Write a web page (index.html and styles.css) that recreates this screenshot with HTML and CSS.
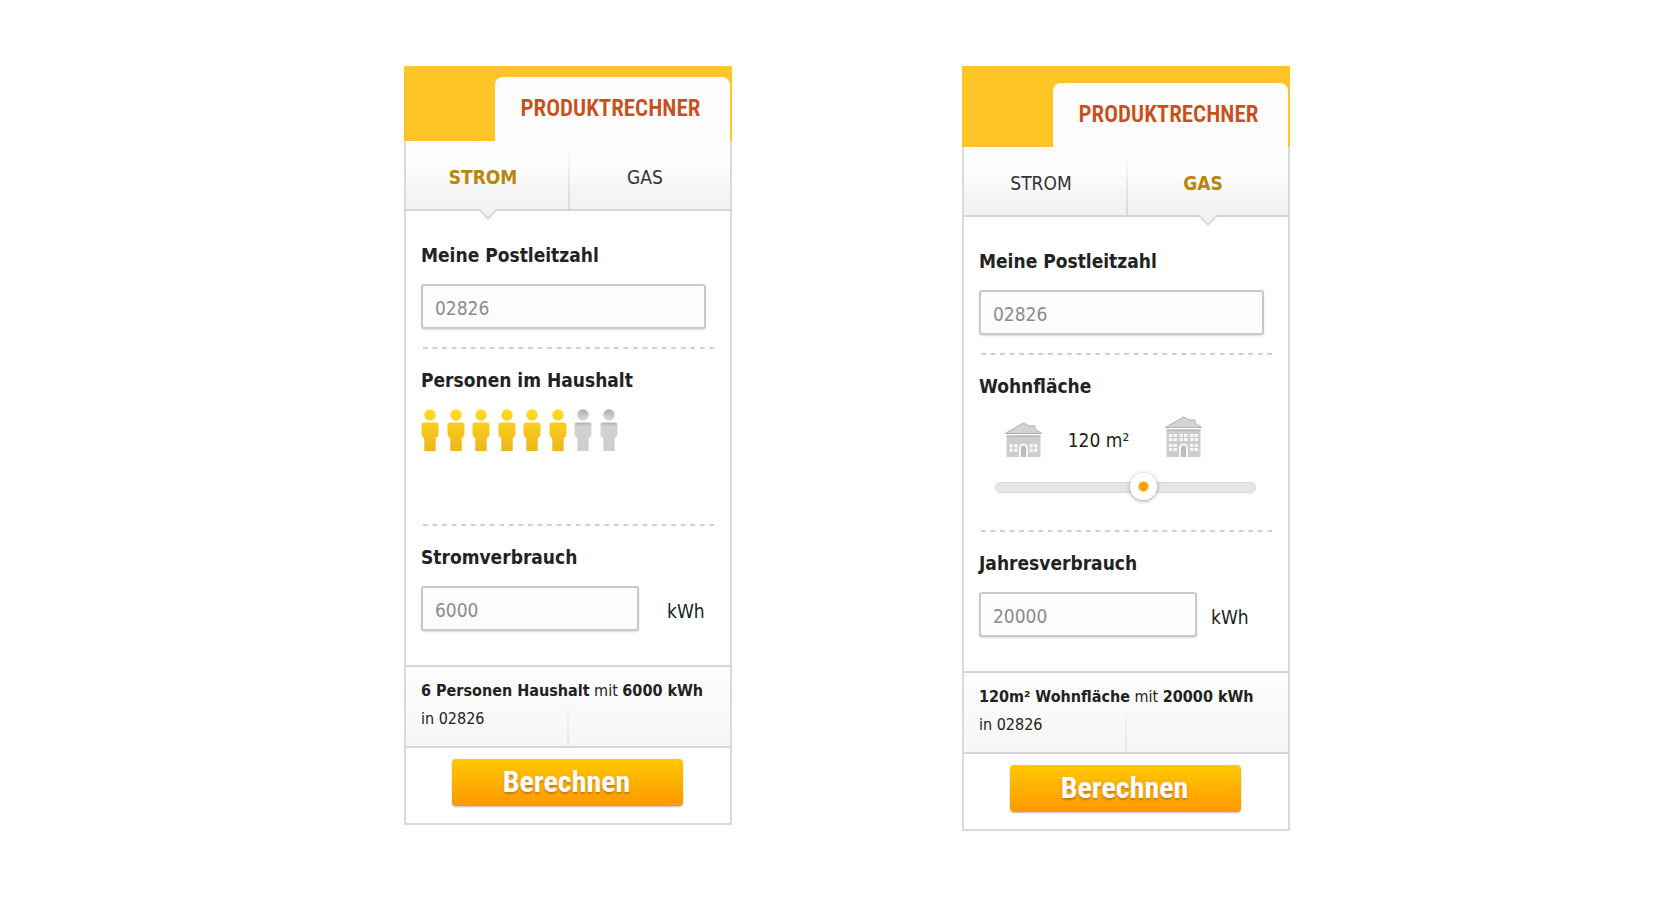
FILE: index.html
```html
<!DOCTYPE html>
<html lang="de">
<head>
  <meta charset="UTF-8">
  <meta name="viewport" content="width=device-width, initial-scale=1.0">
  <title>Produktrechner</title>
  <link rel="stylesheet" href="styles.css">
</head>
<body>
  <!-- shared shapes -->
  <svg class="defs" width="0" height="0" aria-hidden="true">
    <defs>
      <linearGradient id="gold" x1="0" y1="0" x2="0" y2="42" gradientUnits="userSpaceOnUse">
        <stop offset="0" stop-color="#ffdc20"/>
        <stop offset="1" stop-color="#efb41c"/>
      </linearGradient>
      <linearGradient id="silver" x1="0" y1="0" x2="0" y2="42" gradientUnits="userSpaceOnUse">
        <stop offset="0" stop-color="#a8a8a8"/>
        <stop offset="0.2" stop-color="#d2d2d2"/>
        <stop offset="0.3" stop-color="#d0d0d0"/>
        <stop offset="0.32" stop-color="#b0b0b0"/>
        <stop offset="0.42" stop-color="#d2d2d2"/>
        <stop offset="1" stop-color="#cecece"/>
      </linearGradient>
      <symbol id="person" viewBox="0 0 18 42">
        <circle cx="9" cy="6" r="5.700"/>
        <path d="M3 13.500h12q2.500 0 2.500 2.500v9.500q0 2.300-2 2.700l-0.800 1.500V42H3.300V29.700L2.500 28.200Q0.500 27.800 0.500 25.500V16q0-2.500 2.500-2.500z"/>
      </symbol>
    </defs>
  </svg>

  <main class="container">
    <form class="panel">
      <header class="panel-head">
        <h2>PRODUKTRECHNER</h2>
      </header>
      <div class="panel-body">
        <nav class="tabs">
          <a href="#strom" class="active">STROM</a>
          <a href="#gas">GAS</a>
        </nav>
        <div class="field field-first">
          <label for="plz1">Meine Postleitzahl</label>
          <input type="text" id="plz1" value="02826">
        </div>
        <hr>
        <div class="field field-middle">
          <span class="label" id="personsLabel">Personen im Haushalt</span>
          <div class="persons" role="group" aria-labelledby="personsLabel">
            <button type="button" class="person on" aria-label="1 Person"><svg><use href="#person"/></svg></button>
            <button type="button" class="person on" aria-label="2 Personen"><svg><use href="#person"/></svg></button>
            <button type="button" class="person on" aria-label="3 Personen"><svg><use href="#person"/></svg></button>
            <button type="button" class="person on" aria-label="4 Personen"><svg><use href="#person"/></svg></button>
            <button type="button" class="person on" aria-label="5 Personen"><svg><use href="#person"/></svg></button>
            <button type="button" class="person on" aria-label="6 Personen"><svg><use href="#person"/></svg></button>
            <button type="button" class="person" aria-label="7 Personen"><svg><use href="#person"/></svg></button>
            <button type="button" class="person" aria-label="8 Personen"><svg><use href="#person"/></svg></button>
          </div>
        </div>
        <hr>
        <div class="field field-last">
          <label for="kwh1">Stromverbrauch</label>
          <div class="usage">
            <input type="text" id="kwh1" value="6000">
            <span>kWh</span>
          </div>
        </div>
        <p class="summary"><b>6 Personen Haushalt</b> mit <b>6000 kWh</b><br>in 02826</p>
        <div class="actions">
          <button type="submit" class="submit">Berechnen</button>
        </div>
      </div>
    </form>

    <form class="panel panel-gas">
      <header class="panel-head">
        <h2>PRODUKTRECHNER</h2>
      </header>
      <div class="panel-body">
        <nav class="tabs">
          <a href="#strom">STROM</a>
          <a href="#gas" class="active">GAS</a>
        </nav>
        <div class="field field-first">
          <label for="plz2">Meine Postleitzahl</label>
          <input type="text" id="plz2" value="02826">
        </div>
        <hr>
        <div class="field field-middle">
          <label for="area">Wohnfläche</label>
          <div class="houses">
            <svg class="house" width="37" height="36" viewBox="0 0 37 36" aria-hidden="true">
              <path fill="#d3d3d3" d="M0 11L18.500 0.500 24 3.500h6V7L37 11v1H0z"/>
              <path fill="none" stroke="#b4b4b4" d="M0.500 11.500L18.500 1l5.500 3h6v3l6.500 4.500z"/>
              <path fill="#cdcdcd" d="M1.500 13.500h34V35H1.500z"/>
              <path fill="#b8b8b8" d="M1.500 13.500h34V15H1.500z"/>
              <path fill="#f6f6f6" d="M4.500 22h8v8h-8zM24.500 22h8v8h-8zM14 35V26q0-4.500 4.500-4.500T23 26v9z"/>
              <path stroke="#c6c6c6" fill="none" d="M8.500 22v8M4.500 26h8M28.500 22v8M24.500 26h8"/>
              <path fill="#bdbdbd" d="M16 35V26q0-2.500 2.500-2.500T21 26v9z"/>
            </svg>
            <output class="area" for="area">120 m²</output>
            <svg class="house" width="37" height="42" viewBox="0 0 37 42" aria-hidden="true">
              <path fill="#d3d3d3" d="M0 11L18.500 0.500 24 3.500h6V7L37 11v1H0z"/>
              <path fill="none" stroke="#b4b4b4" d="M0.500 11.500L18.500 1l5.500 3h6v3l6.500 4.500z"/>
              <path fill="#cdcdcd" d="M1.500 13.500h34V41H1.500z"/>
              <path fill="#b8b8b8" d="M1.500 13.500h34V15H1.500z"/>
              <path fill="#f6f6f6" d="M4 18h8v7H4zM14.500 18h8v7h-8zM25 18h8v7h-8zM4 28h8v7H4zM25 28h8v7h-8zM14 41V32q0-4.500 4.500-4.500T23 32v9z"/>
              <path stroke="#c6c6c6" fill="none" d="M8 18v17M18.500 18v7M29 18v17M4 21.500h29M4 31.500h8M25 31.500h8"/>
              <path fill="#bdbdbd" d="M16 41V32q0-2.500 2.500-2.500T21 32v9z"/>
            </svg>
          </div>
          <input type="range" id="area" min="10" max="200" value="120">
        </div>
        <hr>
        <div class="field field-last">
          <label for="kwh2">Jahresverbrauch</label>
          <div class="usage">
            <input type="text" id="kwh2" value="20000">
            <span>kWh</span>
          </div>
        </div>
        <p class="summary"><b>120m² Wohnfläche</b> mit <b>20000 kWh</b><br>in 02826</p>
        <div class="actions">
          <button type="submit" class="submit">Berechnen</button>
        </div>
      </div>
    </form>
  </main>
</body>
</html>
```
FILE: styles.css
```css
* {
  box-sizing: border-box;
}
body {
  font-family: "DejaVu Sans Condensed", "DejaVu Sans", sans-serif;
  font-size: 19px;
  line-height: 24px;
  color: #222;
  background: #fff;
  margin: 0;
}
.defs {
  display: block;
}
.container {
  display: flex;
  flex-wrap: wrap;
  justify-content: center;
  align-items: flex-start;
  gap: 60px 230px;
  padding: 66px 0 60px 14px;
}
.panel {
  width: 328px;
}

/* header */
.panel-head {
  display: flex;
  justify-content: flex-end;
  padding: 11px 2px 0 0;
  background: #ffc527;
}
.panel-gas .panel-head {
  padding-top: 17px;
}
.panel-head h2 {
  width: 235px;
  margin: 0;
  padding: 20px 4px 20px 0;
  background: #fdfdfd;
  border-radius: 8px 8px 0 0;
  font-family: "Roboto Condensed", Roboto, sans-serif;
  font-size: 23px;
  font-weight: 600;
  line-height: 24px;
  text-align: center;
  color: #c9501c;
}
.panel-body {
  border: 2px solid #dadada;
  border-top: none;
}

/* tabs */
.tabs {
  display: flex;
  background: linear-gradient(#fdfdfd 30%, #f1f1f1);
  border-bottom: 2px solid #d6d6d6;
}
.tabs a {
  position: relative;
  flex: 1;
  padding: 24px 8px 20px 0;
  text-align: center;
  text-decoration: none;
  color: #333;
}
.tabs a + a {
  background: linear-gradient(transparent 10%, #d8d8d8) left / 2px 100% no-repeat;
}
.tabs .active {
  font-weight: bold;
  color: #b8860b;
}
.tabs .active::after {
  content: "";
  position: absolute;
  left: 50%;
  bottom: -8px;
  width: 12px;
  height: 12px;
  margin-left: -6px;
  background: #f2f2f2;
  border: solid #dadada;
  border-width: 0 2px 2px 0;
  transform: rotate(45deg);
}

/* fields */
.field {
  padding: 19px 15px 18px;
}
.field-first {
  padding-top: 32px;
}
.field-middle {
  height: 175px;
}
.field-last {
  padding-bottom: 34px;
  border-bottom: 2px solid #d6d6d6;
}
.field label,
.label {
  display: block;
  margin-bottom: 17px;
  font-weight: bold;
}
hr {
  height: 2px;
  margin: 0 11px 0 17px;
  border: none;
  background: linear-gradient(90deg, #cfcfcf 55%, transparent 55%) 0 0 / calc(100% / 31) 2px;
}
input[type="text"] {
  display: block;
  width: 285px;
  height: 45px;
  padding: 2px 12px 0;
  background: #fcfcfc;
  border: 2px solid #c8c8c8;
  border-radius: 3px;
  box-shadow: 0 1px 2px #ddd;
  font: inherit;
  color: #8c8c8c;
}
.usage {
  display: flex;
  align-items: center;
  gap: 28px;
}
.panel-gas .usage {
  gap: 14px;
}
.usage input[type="text"] {
  width: 218px;
}
.usage span {
  padding-top: 4px;
}

/* persons */
.persons {
  display: flex;
  justify-content: space-between;
  width: 197px;
}
.person {
  padding: 0;
  border: none;
  background: none;
  cursor: pointer;
}
.person svg {
  display: block;
  width: 18px;
  height: 42px;
  fill: url(#silver);
}
.person.on svg {
  fill: url(#gold);
}

/* area slider */
.field .houses {
  display: flex;
  align-items: flex-end;
  height: 42px;
  margin: 0 0 16px 26px;
  padding-top: 1px;
}
.field-middle label {
  margin-bottom: 18px;
}
.area {
  width: 123px;
  margin-bottom: 6px;
  padding-right: 10px;
  text-align: center;
}
input[type="range"] {
  display: block;
  appearance: none;
  width: 261px;
  height: 27px;
  margin: 0 0 0 16px;
  background: none;
}
input[type="range"]::-webkit-slider-runnable-track {
  height: 11px;
  background: #e6e6e6;
  border: 1px solid #d8d8d8;
  border-radius: 6px;
}
input[type="range"]::-webkit-slider-thumb {
  appearance: none;
  width: 27px;
  height: 27px;
  margin-top: -10px;
  border-radius: 50%;
  background: radial-gradient(circle, #fb9f0a 4px, #fff 6px);
  box-shadow: 0 1px 4px #999;
}

/* summary + button */
.summary {
  margin: 0;
  padding: 10px 15px 13px;
  background:
    linear-gradient(transparent 40%, #e6e6e6) 161px 0 / 2px 100% no-repeat,
    linear-gradient(#fdfdfd, #f6f6f6);
  border-bottom: 2px solid #d6d6d6;
  font-size: 16px;
  line-height: 28px;
}
.actions {
  padding: 11px 0 17px 46px;
}
.submit {
  display: block;
  width: 231px;
  height: 47px;
  padding: 0 2px 3px 0;
  border: none;
  border-radius: 4px;
  background: linear-gradient(#ffc800, #ff9800);
  box-shadow: 0 1px 2px #bbb;
  font-family: "Roboto Condensed", Roboto, sans-serif;
  font-size: 30px;
  font-weight: bold;
  color: #fff;
  text-shadow: 0 2px 2px #c97a10;
  cursor: pointer;
}
```
